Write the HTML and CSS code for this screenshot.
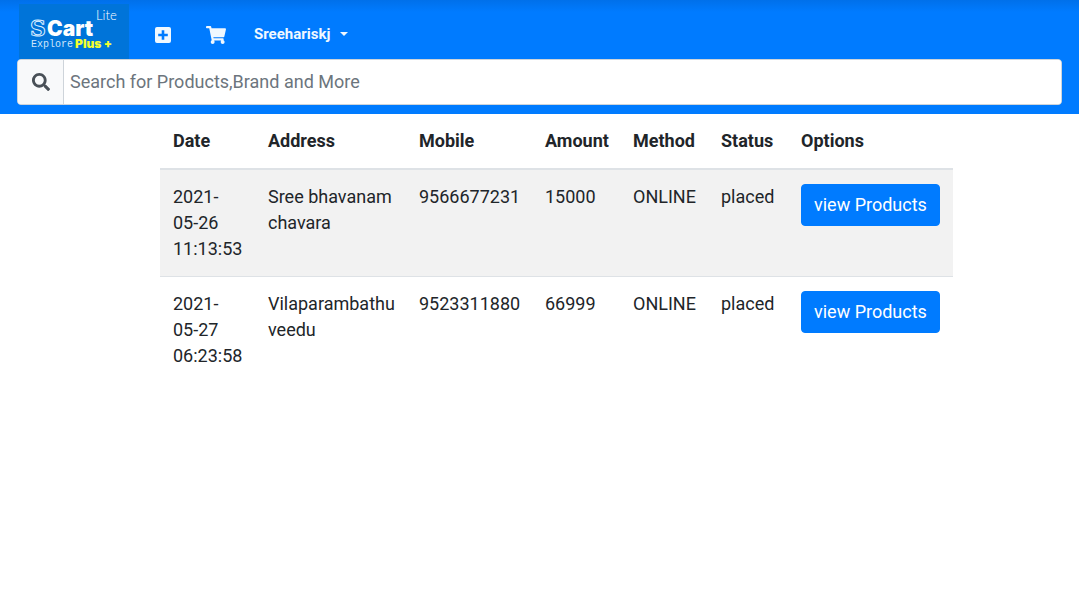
FILE: index.html
```html
<!DOCTYPE html>
<html lang="en">
<head>
<meta charset="utf-8">
<meta name="viewport" content="width=device-width, initial-scale=1">
<title>SCart Orders</title>
<link rel="stylesheet" href="styles.css">
</head>
<body>
<header class="navbar">
  <nav class="nav-row" aria-label="Main">
    <a class="brand" href="#" aria-label="SCart Lite">
      <svg class="brand-logo" viewBox="0 0 110 55" role="img" aria-label="SCart Lite Explore Plus +">
        <text class="logo-lite" x="77" y="16">Lite</text>
        <text class="logo-s" x="11" y="32">S</text>
        <text class="logo-cart" x="28" y="32">Cart</text>
        <text class="logo-explore" x="12" y="43">Explore</text>
        <text class="logo-plus" x="56" y="44">Plus +</text>
      </svg>
    </a>
    <a class="nav-icon" href="#" aria-label="Orders">
      <svg width="16" height="16" viewBox="0 0 16 16"><path fill="currentColor" fill-rule="evenodd" d="M2 0h12a2 2 0 0 1 2 2v12a2 2 0 0 1-2 2H2a2 2 0 0 1-2-2V2a2 2 0 0 1 2-2zM6.700 3.200v3.500H3.200v2.600h3.500v3.500h2.600V9.300h3.500V6.700H9.300V3.200z"/></svg>
    </a>
    <a class="nav-icon" href="#" aria-label="Cart">
      <svg width="20" height="18" viewBox="0 0 576 512"><path fill="currentColor" d="M528.100 301.300l47.300-208C578.800 78.300 567.400 64 552 64H159.200l-9.200-44.800C147.800 8 137.900 0 126.500 0H24C10.700 0 0 10.700 0 24v16c0 13.300 10.700 24 24 24h69.900l70.200 343.400C147.300 417.100 136 435.200 136 456c0 30.900 25.100 56 56 56s56-25.100 56-56c0-15.700-6.400-29.800-16.800-40h209.600C430.400 426.200 424 440.300 424 456c0 30.900 25.100 56 56 56s56-25.100 56-56c0-22.200-12.900-41.300-31.600-50.400l5.500-24.300c3.400-15-8-29.300-23.400-29.300H218.100l-6.500-32h293.100c11.200 0 20.900-7.800 23.400-18.700z"/></svg>
    </a>
    <button class="user-menu" type="button" aria-haspopup="true">Sreehariskj<span class="caret"></span></button>
  </nav>
  <form class="search" role="search">
    <button class="search-button" type="button" aria-label="Search">
      <svg width="18" height="18" viewBox="0 0 512 512"><path fill="currentColor" d="M505 442.700L405.300 343c-4.500-4.500-10.600-7-17-7H372c27.600-35.300 44-79.700 44-128C416 93.100 322.900 0 208 0S0 93.100 0 208s93.100 208 208 208c48.300 0 92.700-16.400 128-44v16.300c0 6.400 2.500 12.500 7 17l99.700 99.700c9.400 9.400 24.600 9.400 33.900 0l28.300-28.300c9.400-9.400 9.400-24.600.1-34zM208 336c-70.700 0-128-57.200-128-128 0-70.700 57.200-128 128-128 70.700 0 128 57.200 128 128 0 70.700-57.200 128-128 128z"/></svg>
    </button>
    <input class="search-input" type="search" aria-label="Search products" placeholder="Search for Products,Brand and More">
  </form>
</header>
<main class="content">
  <table class="orders">
    <colgroup>
      <col class="col-date"><col class="col-address"><col class="col-mobile"><col class="col-amount"><col class="col-method"><col class="col-status"><col class="col-options">
    </colgroup>
    <thead>
      <tr><th scope="col">Date</th><th scope="col">Address</th><th scope="col">Mobile</th><th scope="col">Amount</th><th scope="col">Method</th><th scope="col">Status</th><th scope="col">Options</th></tr>
    </thead>
    <tbody>
      <tr><td class="date">2021-05-26 11:13:53</td><td>Sree bhavanam chavara</td><td>9566677231</td><td>15000</td><td>ONLINE</td><td>placed</td><td><a class="btn" href="#">view Products</a></td></tr>
      <tr><td class="date">2021-05-27 06:23:58</td><td>Vilaparambathu veedu</td><td>9523311880</td><td>66999</td><td>ONLINE</td><td>placed</td><td><a class="btn" href="#">view Products</a></td></tr>
    </tbody>
  </table>
</main>
</body>
</html>
```

FILE: styles.css
```css
* {
  box-sizing: border-box;
}

body {
  margin: 0;
  background: #fff;
  color: #212529;
  font-family: Roboto, "Liberation Sans", sans-serif;
  font-size: 18px;
  line-height: 26px;
}

svg {
  display: block;
}

.navbar {
  padding: 4px 17px 9px;
  background: linear-gradient(#0070ea, #007bff 12px);
}

.nav-row {
  display: flex;
  align-items: center;
  padding-left: 2px;
}

.brand {
  margin-right: 26px;
  background: #0074d9;
}

.brand-logo {
  width: 110px;
  height: 55px;
}

.brand-logo text {
  fill: #fff;
}

.brand-logo .logo-lite {
  font-family: Lato, sans-serif;
  font-size: 13px;
  font-weight: 300;
}

.brand-logo .logo-s {
  fill: #0074d9;
  stroke: #d9edff;
  font-family: "DejaVu Serif", serif;
  font-size: 22px;
  font-weight: 700;
}

.brand-logo .logo-cart {
  font-family: Inter, sans-serif;
  font-size: 21px;
  font-weight: 900;
}

.brand-logo .logo-explore {
  fill: #cfe6fb;
  font-family: "Liberation Mono", monospace;
  font-size: 10px;
}

.brand-logo .logo-plus {
  fill: #f4ff2b;
  font-family: Inter, sans-serif;
  font-size: 12px;
  font-weight: 900;
}

.nav-icon {
  margin-right: 35px;
  padding-top: 6px;
  color: #f0f8ff;
}

.nav-icon + .nav-icon {
  margin-right: 28px;
}

.user-menu {
  display: flex;
  align-items: center;
  gap: 10px;
  padding: 5px 0 0;
  border: 0;
  background: none;
  color: #f0f8ff;
  font: 700 15px/22px Roboto, "Liberation Sans", sans-serif;
}

.caret {
  border: 4px solid transparent;
  border-top-color: currentColor;
  border-bottom: 0;
}

.search {
  display: flex;
  height: 46px;
  border: 1px solid #ced4da;
  border-radius: 4px;
  background: #fff;
  overflow: hidden;
}

.search-button {
  display: grid;
  place-items: center;
  width: 46px;
  padding: 0;
  border: 0;
  border-right: 1px solid #ced4da;
  background: #f8f9fa;
  color: #495057;
}

.search-input {
  flex: 1;
  min-width: 0;
  padding: 0 6px;
  border: 0;
  background: #fff;
  color: #495057;
  font: inherit;
}

.search-input::placeholder {
  color: #6c757d;
  opacity: 1;
}

.content {
  padding-left: 160px;
}

.orders {
  width: 793px;
  table-layout: fixed;
  border-collapse: separate;
  border-spacing: 0;
}

.col-date {
  width: 95px;
}

.col-address {
  width: 151px;
}

.col-mobile {
  width: 126px;
}

.col-amount,
.col-method {
  width: 88px;
}

.col-status {
  width: 80px;
}

.orders th,
.orders td {
  padding: 14px 8px 14px 13px;
  text-align: left;
  vertical-align: top;
}

.orders .date {
  padding-right: 12px;
}

.orders th {
  border-bottom: 2px solid #dee2e6;
  font-weight: 700;
}

.orders tbody tr:nth-child(odd) td {
  border-bottom: 1px solid #dee2e6;
  background: #f2f2f2;
}

.btn {
  display: inline-block;
  padding: 7px 12px;
  border: 1px solid #007bff;
  border-radius: 4px;
  background: #007bff;
  color: #fff;
  text-decoration: none;
  white-space: nowrap;
}
```
